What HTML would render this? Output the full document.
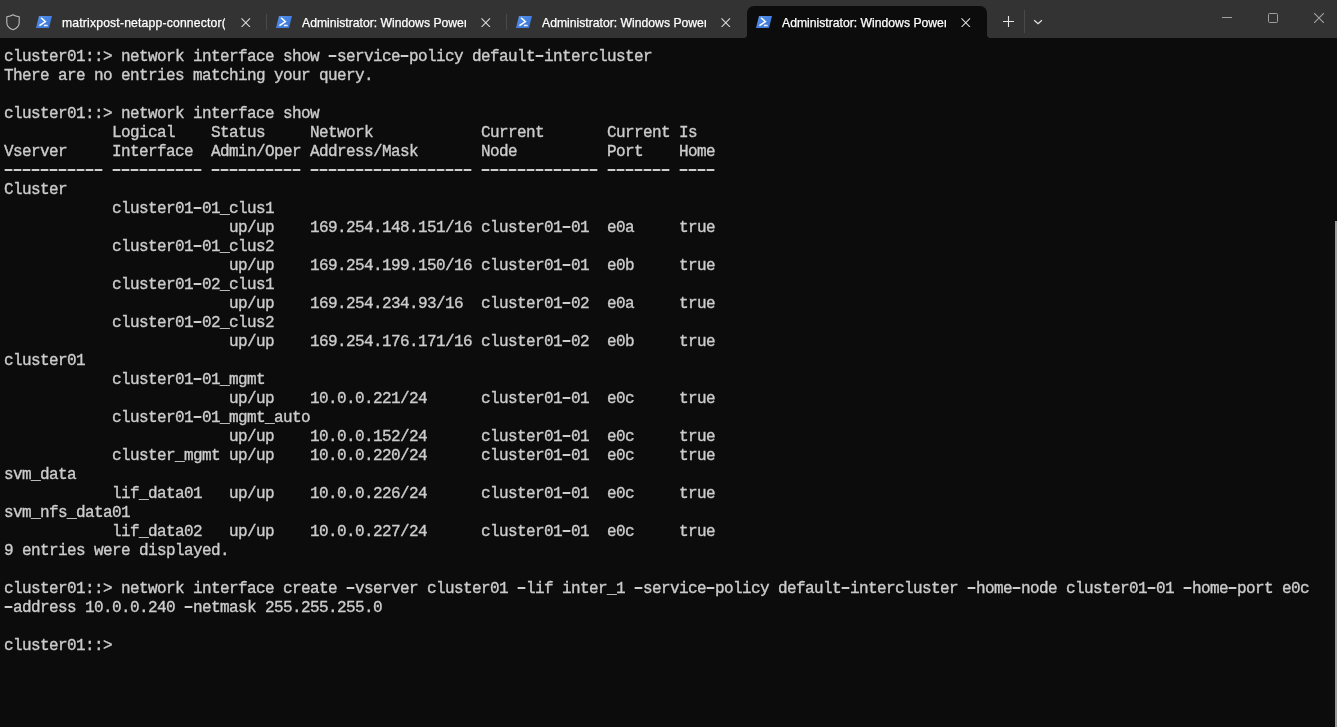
<!DOCTYPE html>
<html><head><meta charset="utf-8"><title>Windows Terminal</title>
<style>
html,body{margin:0;padding:0;}
body{width:1337px;height:727px;overflow:hidden;background:#0c0c0c;position:relative;}
#bar{position:absolute;left:0;top:0;width:1337px;height:38px;background:#333333;will-change:transform;}
.tab{position:absolute;top:6px;height:32px;width:240px;}
.tab.active{background:#0c0c0c;border-radius:7px 7px 0 0;}
.tab.active::before,.tab.active::after{content:"";position:absolute;bottom:0;width:4px;height:4px;}
.tab.active::before{left:-4px;background:radial-gradient(circle at 0 0,transparent 4px,#0c0c0c 4.5px);}
.tab.active::after{right:-4px;background:radial-gradient(circle at 100% 0,transparent 4px,#0c0c0c 4.5px);}
.tab .ico{position:absolute;left:9px;top:10px;width:16px;height:12px;}
.tab .ttl{position:absolute;left:35px;top:9px;width:164px;overflow:hidden;white-space:nowrap;font:12.2px/16px "Liberation Sans",sans-serif;color:#ffffff;-webkit-text-stroke:0.25px #fff;}
.tab .x{position:absolute;left:214px;top:11.5px;width:9.5px;height:9.5px;}
.sep{position:absolute;top:14px;width:1px;height:16px;background:#4a4a4a;}
#term{position:absolute;left:4px;top:48px;margin:0;font:16px/19px "Liberation Mono",monospace;letter-spacing:-0.6016px;color:#cccccc;white-space:pre;-webkit-text-stroke:0.35px #cccccc;will-change:transform;}
#term b{font-weight:normal;color:transparent;-webkit-text-stroke:0;background:linear-gradient(to right,#505050 0,#505050 1px,#cccccc 1px,#cccccc 8px,#505050 8px,#505050 9px) no-repeat;background-size:9px 2px;background-position:0px 6.8px;}
#sb{position:absolute;left:1335px;top:221px;width:2px;height:506px;background:#9a9a9a;}
</style></head><body>
<div id="bar">
 <svg style="position:absolute;left:6px;top:14px" width="14" height="17" viewBox="0 0 14 17"><path d="M7 0.7 C5 2 3 2.5 0.8 2.8 V8.6 C0.8 12 3.3 14.6 7 15.8 C10.7 14.6 13.2 12 13.2 8.6 V2.8 C11 2.5 9 2 7 0.7 Z" fill="none" stroke="#bdbdbd" stroke-width="1.1" stroke-linejoin="round"/></svg>
 <div class="tab" style="left:27px"><svg class="ico" viewBox="0 0 16 12"><defs><linearGradient id="g" x1="0" y1="0" x2="1" y2="1"><stop offset="0" stop-color="#5a94ee"/><stop offset="1" stop-color="#3370d4"/></linearGradient></defs><path d="M3 0H16L13 12H0Z" fill="url(#g)"/><path d="M5 1.7L9.4 5.6L3.4 9.6" fill="none" stroke="#fff" stroke-width="1.5"/><path d="M7.8 9.5H11.6" stroke="#f0f4fc" stroke-width="1.5"/></svg><div class="ttl" style="letter-spacing:0.17px;width:163px">matrixpost-netapp-connector(</div><svg class="x" viewBox="0 0 10 10"><path d="M0.5 0.5L9.5 9.5M9.5 0.5L0.5 9.5" stroke="#e0e0e0" stroke-width="1.1"/></svg></div>
 <div class="sep" style="left:266px"></div>
 <div class="tab" style="left:267px"><svg class="ico" viewBox="0 0 16 12"><defs><linearGradient id="g" x1="0" y1="0" x2="1" y2="1"><stop offset="0" stop-color="#5a94ee"/><stop offset="1" stop-color="#3370d4"/></linearGradient></defs><path d="M3 0H16L13 12H0Z" fill="url(#g)"/><path d="M5 1.7L9.4 5.6L3.4 9.6" fill="none" stroke="#fff" stroke-width="1.5"/><path d="M7.8 9.5H11.6" stroke="#f0f4fc" stroke-width="1.5"/></svg><div class="ttl">Administrator: Windows PowerShell</div><svg class="x" viewBox="0 0 10 10"><path d="M0.5 0.5L9.5 9.5M9.5 0.5L0.5 9.5" stroke="#e0e0e0" stroke-width="1.1"/></svg></div>
 <div class="sep" style="left:506px"></div>
 <div class="tab" style="left:507px"><svg class="ico" viewBox="0 0 16 12"><defs><linearGradient id="g" x1="0" y1="0" x2="1" y2="1"><stop offset="0" stop-color="#5a94ee"/><stop offset="1" stop-color="#3370d4"/></linearGradient></defs><path d="M3 0H16L13 12H0Z" fill="url(#g)"/><path d="M5 1.7L9.4 5.6L3.4 9.6" fill="none" stroke="#fff" stroke-width="1.5"/><path d="M7.8 9.5H11.6" stroke="#f0f4fc" stroke-width="1.5"/></svg><div class="ttl">Administrator: Windows PowerShell</div><svg class="x" viewBox="0 0 10 10"><path d="M0.5 0.5L9.5 9.5M9.5 0.5L0.5 9.5" stroke="#e0e0e0" stroke-width="1.1"/></svg></div>
 <div class="tab active" style="left:747px"><svg class="ico" viewBox="0 0 16 12"><defs><linearGradient id="g" x1="0" y1="0" x2="1" y2="1"><stop offset="0" stop-color="#5a94ee"/><stop offset="1" stop-color="#3370d4"/></linearGradient></defs><path d="M3 0H16L13 12H0Z" fill="url(#g)"/><path d="M5 1.7L9.4 5.6L3.4 9.6" fill="none" stroke="#fff" stroke-width="1.5"/><path d="M7.8 9.5H11.6" stroke="#f0f4fc" stroke-width="1.5"/></svg><div class="ttl">Administrator: Windows PowerShell</div><svg class="x" viewBox="0 0 10 10"><path d="M0.5 0.5L9.5 9.5M9.5 0.5L0.5 9.5" stroke="#e0e0e0" stroke-width="1.1"/></svg></div>
 <svg style="position:absolute;left:1003px;top:16px" width="11" height="11" viewBox="0 0 11 11"><path d="M5.5 0V11M0 5.5H11" stroke="#e6e6e6" stroke-width="1.1"/></svg>
 <div class="sep" style="left:1024px;top:10px;height:23px"></div>
 <svg style="position:absolute;left:1033px;top:19px" width="10" height="6" viewBox="0 0 10 6"><path d="M1.2 1.2L5.1 4.7L8.9 1.2" fill="none" stroke="#e6e6e6" stroke-width="1.2"/></svg>
 <svg style="position:absolute;left:1222px;top:17px" width="10" height="1" viewBox="0 0 10 1"><path d="M0 0.5H10" stroke="#a0a0a0" stroke-width="1"/></svg>
 <svg style="position:absolute;left:1268px;top:13px" width="10" height="10" viewBox="0 0 10 10"><rect x="0.5" y="0.5" width="9" height="9" rx="1" fill="none" stroke="#a0a0a0" stroke-width="1"/></svg>
 <svg style="position:absolute;left:1314px;top:13px" width="10" height="10" viewBox="0 0 10 10"><path d="M0 0L10 10M10 0L0 10" stroke="#a0a0a0" stroke-width="1.15"/></svg>
</div>
<pre id="term">cluster01::&gt; network interface show <b>-</b>service<b>-</b>policy default<b>-</b>intercluster
There are no entries matching your query.

cluster01::&gt; network interface show
            Logical    Status     Network            Current       Current Is
Vserver     Interface  Admin/Oper Address/Mask       Node          Port    Home
<b>-</b><b>-</b><b>-</b><b>-</b><b>-</b><b>-</b><b>-</b><b>-</b><b>-</b><b>-</b><b>-</b> <b>-</b><b>-</b><b>-</b><b>-</b><b>-</b><b>-</b><b>-</b><b>-</b><b>-</b><b>-</b> <b>-</b><b>-</b><b>-</b><b>-</b><b>-</b><b>-</b><b>-</b><b>-</b><b>-</b><b>-</b> <b>-</b><b>-</b><b>-</b><b>-</b><b>-</b><b>-</b><b>-</b><b>-</b><b>-</b><b>-</b><b>-</b><b>-</b><b>-</b><b>-</b><b>-</b><b>-</b><b>-</b><b>-</b> <b>-</b><b>-</b><b>-</b><b>-</b><b>-</b><b>-</b><b>-</b><b>-</b><b>-</b><b>-</b><b>-</b><b>-</b><b>-</b> <b>-</b><b>-</b><b>-</b><b>-</b><b>-</b><b>-</b><b>-</b> <b>-</b><b>-</b><b>-</b><b>-</b>
Cluster
            cluster01<b>-</b>01_clus1
                         up/up    169.254.148.151/16 cluster01<b>-</b>01  e0a     true
            cluster01<b>-</b>01_clus2
                         up/up    169.254.199.150/16 cluster01<b>-</b>01  e0b     true
            cluster01<b>-</b>02_clus1
                         up/up    169.254.234.93/16  cluster01<b>-</b>02  e0a     true
            cluster01<b>-</b>02_clus2
                         up/up    169.254.176.171/16 cluster01<b>-</b>02  e0b     true
cluster01
            cluster01<b>-</b>01_mgmt
                         up/up    10.0.0.221/24      cluster01<b>-</b>01  e0c     true
            cluster01<b>-</b>01_mgmt_auto
                         up/up    10.0.0.152/24      cluster01<b>-</b>01  e0c     true
            cluster_mgmt up/up    10.0.0.220/24      cluster01<b>-</b>01  e0c     true
svm_data
            lif_data01   up/up    10.0.0.226/24      cluster01<b>-</b>01  e0c     true
svm_nfs_data01
            lif_data02   up/up    10.0.0.227/24      cluster01<b>-</b>01  e0c     true
9 entries were displayed.

cluster01::&gt; network interface create <b>-</b>vserver cluster01 <b>-</b>lif inter_1 <b>-</b>service<b>-</b>policy default<b>-</b>intercluster <b>-</b>home<b>-</b>node cluster01<b>-</b>01 <b>-</b>home<b>-</b>port e0c
<b>-</b>address 10.0.0.240 <b>-</b>netmask 255.255.255.0

cluster01::&gt;</pre>
<div id="sb"></div>
</body></html>
